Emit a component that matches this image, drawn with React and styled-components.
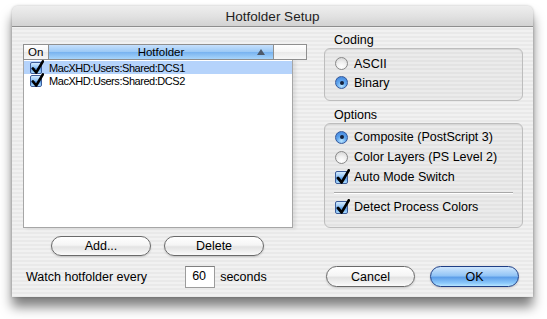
import React from 'react'
import styled, { createGlobalStyle, css } from 'styled-components'

const GlobalStyle = createGlobalStyle`
  html, body {
    margin: 0;
    padding: 0;
    background: #ffffff;
  }
  body {
    font-family: "Liberation Sans", Arial, sans-serif;
    color: #000;
  }
`

const stripes = css`
  background-color: #ededed;
  background-image: repeating-linear-gradient(
    to bottom,
    #f1f1f1 0px,
    #f1f1f1 2px,
    #e9e9e9 2px,
    #e9e9e9 4px
  );
`

const Page = styled.div`
  padding: 6px 0 0 12px;
  width: 547px;
  height: 319px;
  box-sizing: border-box;
  overflow: hidden;
`

const Window = styled.div`
  width: 521px;
  height: 291px;
  display: flex;
  flex-direction: column;
  border-radius: 6px 6px 0 0;
  box-shadow: 0 10px 12px rgba(0, 0, 0, 0.5), 0 0 3px rgba(0, 0, 0, 0.25);
  ${stripes}
`

const TitleBar = styled.div`
  height: 20px;
  flex: none;
  display: flex;
  align-items: center;
  justify-content: center;
  font-size: 13.5px;
  color: #1e1e1e;
  border-radius: 6px 6px 0 0;
  border-bottom: 1px solid #8e8e8e;
  background: linear-gradient(to bottom, #eeeeee 0%, #e2e2e2 50%, #d2d2d2 100%);
`

const Content = styled.div`
  flex: 1;
  display: flex;
  gap: 17px;
  padding: 0 10px 0 11px;
`

const LeftColumn = styled.div`
  width: 284px;
  padding-top: 17px;
  display: flex;
  flex-direction: column;
`

const ListFrame = styled.div`
  display: flex;
  flex-direction: column;
`

const HeaderRow = styled.div`
  display: flex;
  height: 16px;
  box-sizing: border-box;
  border: 1px solid #8f8f8f;
  font-size: 11.5px;
`

const HeaderCell = styled.div`
  width: ${p => (p.$w ? `${p.$w}px` : 'auto')};
  flex: ${p => (p.$grow ? 1 : 'none')};
  position: relative;
  display: flex;
  align-items: center;
  justify-content: ${p => (p.$center ? 'center' : 'flex-start')};
  padding-left: ${p => (p.$center ? 0 : 4)}px;
  box-sizing: border-box;
  border-right: ${p => (p.$last ? 'none' : '1px solid #8f8f8f')};
  background: ${p =>
    p.$active
      ? 'linear-gradient(to bottom, #c6e0fc 0%, #9cc9f6 48%, #78b3f0 52%, #a8d5fb 100%)'
      : 'linear-gradient(to bottom, #ffffff 0%, #f4f4f4 50%, #e9e9e9 52%, #f7f7f7 100%)'};
`

const SortArrow = styled.span`
  position: absolute;
  right: 8px;
  top: 4px;
  width: 0;
  height: 0;
  border-left: 4px solid transparent;
  border-right: 4px solid transparent;
  border-bottom: 6px solid #4e5a6a;
`

const ListBody = styled.div`
  width: 270px;
  height: 168px;
  box-sizing: border-box;
  padding-top: 1px;
  background: #ffffff;
  border: 1px solid #a6a6a6;
  border-top: none;
  box-shadow: 3px 1px 3px rgba(0, 0, 0, 0.08);
`

const Row = styled.div`
  height: 13px;
  display: flex;
  align-items: center;
  gap: 7px;
  padding-left: 6px;
  font-size: 11px;
  letter-spacing: -0.45px;
  background: ${p => (p.$selected ? '#b5d3fb' : 'transparent')};
`

const ButtonRow = styled.div`
  display: flex;
  gap: 13px;
  margin-top: 8px;
  padding-left: 28px;
`

const PushButton = styled.button`
  width: ${p => p.$w}px;
  height: ${p => p.$h}px;
  padding: 0;
  border-radius: 11px;
  font-family: "Liberation Sans", Arial, sans-serif;
  font-size: 12.5px;
  color: #000;
  border: 1px solid ${p => (p.$primary ? '#1f3f86' : '#6a6a6a')};
  background: ${p =>
    p.$primary
      ? 'linear-gradient(to bottom, #cfe6fd 0%, #93c5f6 45%, #5e9fe9 55%, #8cc9fb 85%, #b8e6ff 100%)'
      : 'linear-gradient(to bottom, #ffffff 0%, #f5f5f5 45%, #e3e3e3 55%, #f2f2f2 85%, #fbfbfb 100%)'};
  box-shadow: 0 1px 2px rgba(0, 0, 0, 0.18);
`

const WatchRow = styled.div`
  display: flex;
  align-items: center;
  margin-top: 10px;
  padding-left: 3px;
  font-size: 12.5px;
`

const NumberField = styled.input`
  width: 30px;
  height: 22px;
  box-sizing: border-box;
  margin: 0 5px 0 38px;
  padding: 0 0 2px 6px;
  border: 1px solid #9c9c9c;
  border-top-color: #7f7f7f;
  background: #fff;
  font-family: "Liberation Sans", Arial, sans-serif;
  font-size: 12.5px;
  outline: none;
`

const RightColumn = styled.div`
  width: 199px;
  padding-top: 6px;
  display: flex;
  flex-direction: column;
`

const GroupLabel = styled.div`
  height: 15px;
  line-height: 15px;
  padding-left: 10px;
  font-size: 12.5px;
  margin-top: ${p => p.$top || 0}px;
`

const GroupBox = styled.div`
  height: ${p => p.$h}px;
  box-sizing: border-box;
  padding: ${p => p.$pt}px 10px 0 10px;
  border: 1px solid #bdbdbd;
  border-radius: 6px;
  background: rgba(0, 0, 0, 0.025);
  box-shadow: inset 0 1px 1px rgba(0, 0, 0, 0.06);
`

const OptionRow = styled.div`
  height: ${p => p.$h || 20}px;
  display: flex;
  align-items: center;
  gap: 6px;
  font-size: 12.5px;
`

const Separator = styled.div`
  height: 10px;
  display: flex;
  align-items: center;
  margin: 0 -1px;
  &::before {
    content: '';
    flex: 1;
    height: 1px;
    background: #a8a8a8;
    box-shadow: 0 1px 0 #ffffff;
  }
`

const Radio = styled.span`
  width: 13px;
  height: 13px;
  flex: none;
  box-sizing: border-box;
  border-radius: 50%;
  display: flex;
  align-items: center;
  justify-content: center;
  border: 1px solid ${p => (p.$on ? '#34589a' : '#888888')};
  background: ${p =>
    p.$on
      ? 'radial-gradient(circle at 50% 80%, #b8e4ff 0%, #5fa5ee 45%, #3d7fd8 100%)'
      : 'radial-gradient(circle at 50% 80%, #ffffff 0%, #f0f0f0 45%, #cfcfcf 100%)'};
  &::after {
    content: '';
    display: ${p => (p.$on ? 'block' : 'none')};
    width: 4px;
    height: 4px;
    border-radius: 50%;
    background: #14203a;
  }
`

const CheckBox = styled.span`
  width: ${p => p.$size}px;
  height: ${p => p.$size}px;
  flex: none;
  position: relative;
  box-sizing: border-box;
  border-radius: 2px;
  border: 1px solid #3c5c99;
  background: linear-gradient(to bottom, #d4ebff 0%, #8ec2f5 45%, #5c9ce8 55%, #a9dcff 100%);
  svg {
    position: absolute;
    left: 0;
    top: -3px;
  }
`

function Check({ size = 13 }) {
  return (
    <CheckBox $size={size}>
      <svg width={size + 1} height={size + 3} viewBox="0 0 14 16">
        <path d="M2 9 L5.6 13.4 L12.8 1.4" fill="none" stroke="#000" strokeWidth="2.8" strokeLinecap="round" strokeLinejoin="round" />
      </svg>
    </CheckBox>
  )
}

const ButtonBar = styled.div`
  display: flex;
  gap: 15px;
  padding-left: 2px;
  margin-top: 38px;
`

const folders = ['MacXHD:Users:Shared:DCS1', 'MacXHD:Users:Shared:DCS2']

export default function App() {
  return (
    <Page>
      <GlobalStyle />
      <Window>
        <TitleBar>Hotfolder Setup</TitleBar>
        <Content>
          <LeftColumn>
            <ListFrame>
              <HeaderRow>
                <HeaderCell $w={25}>On</HeaderCell>
                <HeaderCell $w={225} $active $center>
                  Hotfolder
                  <SortArrow />
                </HeaderCell>
                <HeaderCell $grow $last />
              </HeaderRow>
              <ListBody>
                {folders.map((f, i) => (
                  <Row key={f} $selected={i === 0}>
                    <Check size={12} />
                    {f}
                  </Row>
                ))}
              </ListBody>
            </ListFrame>
            <ButtonRow>
              <PushButton $w={100} $h={20}>Add...</PushButton>
              <PushButton $w={100} $h={20}>Delete</PushButton>
            </ButtonRow>
            <WatchRow>
              Watch hotfolder every
              <NumberField defaultValue="60" />
              seconds
            </WatchRow>
          </LeftColumn>
          <RightColumn>
            <GroupLabel>Coding</GroupLabel>
            <GroupBox $h={53} $pt={5}>
              <OptionRow $h={19}>
                <Radio />
                ASCII
              </OptionRow>
              <OptionRow $h={19}>
                <Radio $on />
                Binary
              </OptionRow>
            </GroupBox>
            <GroupLabel $top={7}>Options</GroupLabel>
            <GroupBox $h={105} $pt={3}>
              <OptionRow>
                <Radio $on />
                Composite (PostScript 3)
              </OptionRow>
              <OptionRow>
                <Radio />
                Color Layers (PS Level 2)
              </OptionRow>
              <OptionRow>
                <Check />
                Auto Mode Switch
              </OptionRow>
              <Separator />
              <OptionRow>
                <Check />
                Detect Process Colors
              </OptionRow>
            </GroupBox>
            <ButtonBar>
              <PushButton $w={89} $h={21}>Cancel</PushButton>
              <PushButton $w={89} $h={21} $primary>OK</PushButton>
            </ButtonBar>
          </RightColumn>
        </Content>
      </Window>
    </Page>
  )
}
